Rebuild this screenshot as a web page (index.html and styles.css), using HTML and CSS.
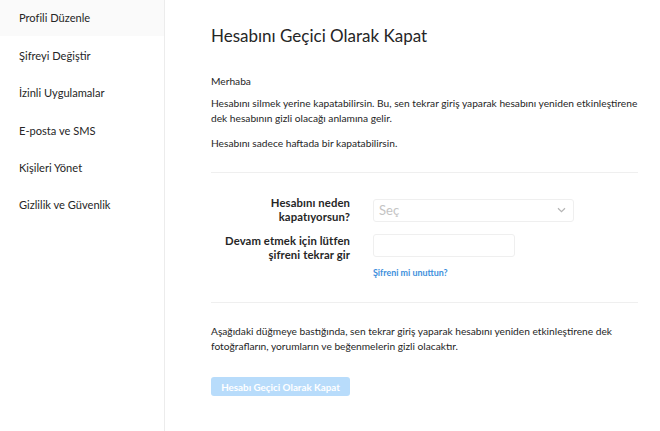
FILE: index.html
```html
<!DOCTYPE html>
<html lang="tr">
<head>
<meta charset="utf-8">
<title>Hesabını Geçici Olarak Kapat</title>
<link rel="stylesheet" href="styles.css">
</head>
<body>
<div class="page">
  <nav class="sidebar">
    <a class="nav-item active">Profili Düzenle</a>
    <a class="nav-item">Şifreyi Değiştir</a>
    <a class="nav-item">İzinli Uygulamalar</a>
    <a class="nav-item">E-posta ve SMS</a>
    <a class="nav-item">Kişileri Yönet</a>
    <a class="nav-item">Gizlilik ve Güvenlik</a>
  </nav>
  <main class="main">
    <h1 class="title">Hesabını Geçici Olarak Kapat</h1>
    <p class="hello">Merhaba</p>
    <p class="text text-first">Hesabını silmek yerine kapatabilirsin. Bu, sen tekrar giriş yaparak hesabını yeniden etkinleştirene dek hesabının gizli olacağı anlamına gelir.</p>
    <p class="text">Hesabını sadece haftada bir kapatabilirsin.</p>
    <hr class="rule rule-top">
    <form class="form">
      <label class="label">Hesabını neden kapatıyorsun?</label>
      <div class="select">
        <span class="placeholder">Seç</span>
        <svg class="chevron" width="9" height="6" viewBox="0 0 9 6"><path d="M1 1.2 L4.5 4.6 L8 1.2" fill="none" stroke="#b5b5b5" stroke-width="1.2"/></svg>
      </div>
      <label class="label label-2">Devam etmek için lütfen şifreni tekrar gir</label>
      <div class="field"><div class="input"></div></div>
      <div></div>
      <a class="forgot">Şifreni mi unuttun?</a>
    </form>
    <hr class="rule rule-bottom">
    <p class="text note">Aşağıdaki düğmeye bastığında, sen tekrar giriş yaparak hesabını yeniden etkinleştirene dek fotoğrafların, yorumların ve beğenmelerin gizli olacaktır.</p>
    <button class="btn" type="button">Hesabı Geçici Olarak Kapat</button>
  </main>
</div>
</body>
</html>
```
FILE: styles.css
```css
* { box-sizing: border-box; }
html, body { margin: 0; padding: 0; background: #fff; }
body {
  font-family: Lato, "Open Sans", sans-serif;
  color: #262626;
  width: 660px;
  height: 431px;
  overflow: hidden;
}
.page {
  display: flex;
  height: 431px;
}
.sidebar {
  width: 165px;
  flex: none;
  border-right: 1px solid #ececec;
  display: flex;
  flex-direction: column;
}
.nav-item {
  display: flex;
  align-items: center;
  height: 37.2px;
  padding-left: 19px;
  font-size: 11.1px;
  color: #262626;
}
.nav-item.active {
  background: #fafafa;
  height: 35.5px;
  margin-bottom: 1.7px;
}
.main {
  flex: 1;
  padding: 26px 22px 0 46px;
}
.title {
  margin: 0;
  font-size: 17px;
  line-height: 20px;
  font-weight: 400;
}
.hello {
  margin: 28px 0 0;
  font-size: 10.2px;
  line-height: 15px;
}
.text {
  margin: 9.5px -8px 0 0;
  font-size: 10.2px;
  line-height: 15px;
}
.text-first { margin-top: 7px; }
.rule {
  border: 0;
  height: 1px;
  background: #efefef;
  margin: 0;
}
.rule-top { margin-top: 21px; }
.form {
  display: grid;
  grid-template-columns: 139px 1fr;
  column-gap: 23px;
  align-items: center;
  padding-top: 23.5px;
}
.label {
  text-align: right;
  font-family: Lato, "Open Sans", sans-serif;
  font-size: 11.3px;
  letter-spacing: 0.1px;
  line-height: 14px;
  font-weight: 700;
  color: #262626;
}
.label-2 { margin-top: 9.7px; }
.select {
  width: 201px;
  height: 23px;
  border: 1px solid #efefef;
  border-radius: 3px;
  display: flex;
  align-items: center;
  justify-content: space-between;
  padding: 0 7px 0 5px;
}
.placeholder {
  font-size: 13px;
  color: #c4c4c4;
}
.field { margin-top: 9.7px; align-self: start; }
.input {
  width: 142px;
  height: 23.5px;
  border: 1px solid #efefef;
  border-radius: 3px;
}
.forgot {
  margin-top: 5.3px;
  font-size: 8.9px;
  line-height: 12px;
  font-weight: 700;
  color: #3d8fdc;
}
.rule-bottom { margin-top: 23px; }
.note {
  margin-top: 21px;
  line-height: 15px;
}
.btn {
  display: block;
  margin-top: 23.5px;
  width: 139px;
  height: 18.5px;
  border: 0;
  border-radius: 3px;
  background: #b8dcfb;
  color: #fff;
  font-family: Lato, "Open Sans", sans-serif;
  font-weight: 700;
  font-size: 9.8px;
  padding: 0;
}
```
